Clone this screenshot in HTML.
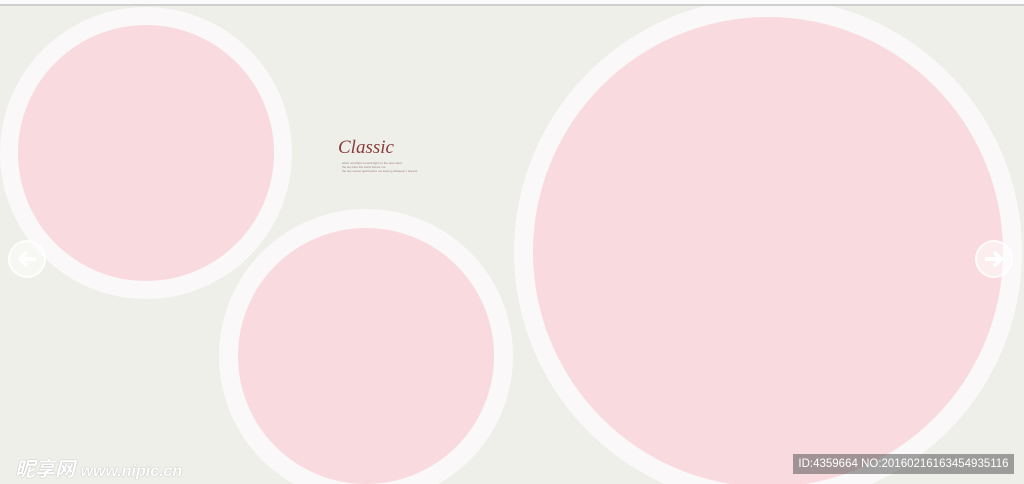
<!DOCTYPE html>
<html><head><meta charset="utf-8"><style>
html{margin:0;padding:0;width:1024px;height:484px;overflow:hidden}
body{margin:0;padding:0;width:1024px;height:484px;overflow:hidden;background:#eeefe9;position:relative;font-family:"Liberation Sans",sans-serif}
.c{position:absolute;border-radius:50%}
.o{background:#faf8f8}
.i{background:#f9dade}
.top{position:absolute;left:0;top:0;width:1024px;height:4px;background:#fafafa;border-bottom:2px solid #cfcfcf}
.arr{position:absolute;width:38px;height:38px;border-radius:50%;background:rgba(255,255,255,.5);border:2px solid rgba(255,255,255,.8);box-sizing:border-box}
</style></head><body>
<div class="c o" style="left:0;top:7px;width:292px;height:292px"></div>
<div class="c i" style="left:18px;top:25px;width:256px;height:256px"></div>
<div class="c o" style="left:219px;top:209px;width:294px;height:294px"></div>
<div class="c i" style="left:238px;top:228px;width:256px;height:256px"></div>
<div class="c o" style="left:514px;top:-2px;width:508px;height:508px"></div>
<div class="c i" style="left:533px;top:17px;width:470px;height:470px"></div>
<div class="top"></div>
<div style="position:absolute;left:338px;top:137px;font-family:'Liberation Serif',serif;font-style:italic;font-size:19px;color:#8a3b3b">Classic</div>
<div style="position:absolute;left:342px;top:161px;font-size:3px;line-height:4px;color:#a08080;width:80px">when cold light moonlit light on the open land<br>the sky blue the world before me<br>the sky sunset gold before me leaving whatever I dreamt</div>
<div class="arr" style="left:8px;top:240px"><svg width="34" height="34" viewBox="0 0 34 34"><path d="M26 17H10M17 10l-7 7 7 7" stroke="#fff" stroke-width="4" fill="none"/></svg></div>
<div class="arr" style="left:975px;top:240px"><svg width="34" height="34" viewBox="0 0 34 34"><path d="M8 17h16M17 10l7 7-7 7" stroke="#fff" stroke-width="4" fill="none"/></svg></div>
<div style="position:absolute;left:15px;top:453px;font-size:20px;font-weight:bold;font-style:italic;color:#fff;font-family:'Liberation Sans','Noto Sans CJK SC',sans-serif;text-shadow:0 0 1px #888">昵享网 <span style="font-size:16px">www.nipic.cn</span></div>
<div style="position:absolute;left:793px;top:454px;width:221px;height:20px;background:rgba(90,90,90,.55);color:#fff;font-size:11.5px;line-height:20px;text-align:center">ID:4359664 NO:20160216163454935116</div>
</body></html>
